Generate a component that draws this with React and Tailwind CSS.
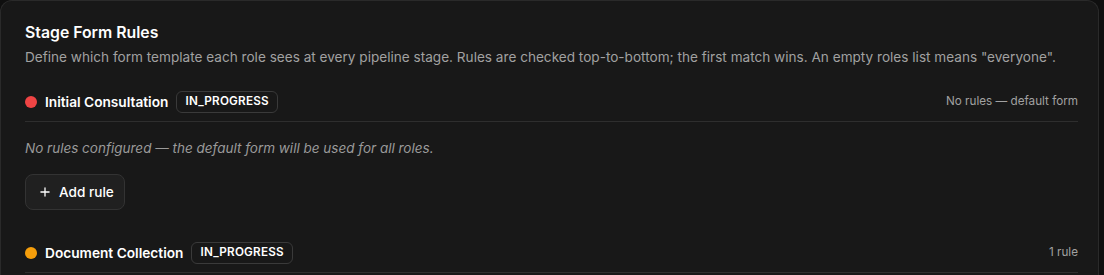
import { Plus } from 'lucide-react'

const stages = [
  { name: 'Initial Consultation', status: 'IN_PROGRESS', dot: 'bg-[#ef4444]', summary: 'No rules — default form', rules: [] },
  { name: 'Document Collection', status: 'IN_PROGRESS', dot: 'bg-[#f59e0b]', summary: '1 rule', rules: [1] },
]

export default function App() {
  return (
    <div className="min-h-screen bg-[#0f0f0f] font-['Inter',sans-serif] antialiased">
      <div className="w-[1099px] h-[275px] overflow-hidden rounded-t-xl border border-b-0 border-[#2a2a2a] bg-[#181818] pl-6 pr-5 pt-[22px]">
        <h2 className="text-[15.8px] leading-5 font-semibold text-white">Stage Form Rules</h2>
        <p className="mt-1 text-[13.6px] leading-5 text-[#a1a1a1]">
          Define which form template each role sees at every pipeline stage. Rules are checked top-to-bottom; the first match wins. An empty roles list means "everyone".
        </p>

        {stages.map((s, i) => (
          <StageBlock key={s.name} stage={s} first={i === 0} />
        ))}
      </div>
    </div>
  )
}

function StageBlock({ stage, first }) {
  return (
    <div className={first ? 'mt-6' : 'mt-8'}>
      <div className="flex items-center justify-between border-b border-[#2e2e2e] pb-2">
        <div className="flex items-center">
          <span className={`w-3 h-3 rounded-full ${stage.dot}`} />
          <span className="ml-2 text-[13.7px] leading-5 font-semibold text-white">{stage.name}</span>
          <span className="ml-2 h-[22px] px-2 flex items-center rounded-md border border-[#3a3a3a] text-[11.7px] font-semibold tracking-[0.02em] text-white">
            {stage.status}
          </span>
        </div>
        <span className="text-[11.7px] text-[#a1a1a1]">{stage.summary}</span>
      </div>
      {stage.rules.length === 0 && (
        <div>
          <p className="mt-4 text-[13.5px] leading-5 italic text-[#9a9a9a]">
            No rules configured — the default form will be used for all roles.
          </p>
          <button className="mt-4 h-9 pl-3 pr-2.5 flex items-center gap-[7px] rounded-lg border border-[#333] bg-[#202020] text-[13.6px] font-medium text-white">
            <Plus className="w-3.5 h-3.5" strokeWidth={2.2} />
            Add rule
          </button>
        </div>
      )}
    </div>
  )
}
